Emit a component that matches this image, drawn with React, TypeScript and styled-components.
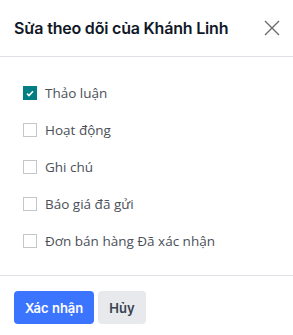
import { useState } from "react";
import styled, { createGlobalStyle } from "styled-components";

const GlobalStyle = createGlobalStyle`
  html, body {
    margin: 0;
    padding: 0;
    background: #ffffff;
  }
  body {
    font-family: Inter, "Noto Sans", sans-serif;
  }
`;

const StyledDialog = styled.div`
  width: 293px;
  height: 335px;
  display: flex;
  flex-direction: column;
  background: #ffffff;
  box-sizing: border-box;
`;

const StyledHeader = styled.div`
  height: 57px;
  display: flex;
  align-items: center;
  justify-content: space-between;
  padding: 0 12px 0 14px;
  border-bottom: 1px solid #dee2e6;
  box-sizing: border-box;
`;

const StyledTitle = styled.h4`
  margin: 0;
  font-size: 16px;
  font-weight: 600;
  color: #111827;
  letter-spacing: -0.2px;
`;

const StyledClose = styled.button`
  width: 18px;
  height: 18px;
  padding: 0;
  border: none;
  background: none;
  display: flex;
  align-items: center;
  justify-content: center;
  cursor: pointer;
`;

const StyledBody = styled.div`
  flex: 1;
  display: flex;
  flex-direction: column;
  gap: 15px;
  padding: 25px 23px 0;
  border-bottom: 1px solid #dee2e6;
`;

const StyledRow = styled.label`
  display: flex;
  align-items: center;
  gap: 8px;
  height: 22px;
  font-family: "Open Sans", sans-serif;
  font-size: 13.5px;
  color: #4b5058;
  cursor: pointer;
`;

const StyledBox = styled.span<{ $checked: boolean }>`
  width: 14px;
  height: 14px;
  box-sizing: border-box;
  border: 1px solid ${(p) => (p.$checked ? "#017e84" : "#c4c6c9")};
  background: ${(p) => (p.$checked ? "#017e84" : "#ffffff")};
  display: flex;
  align-items: center;
  justify-content: center;
`;

const StyledFooter = styled.div`
  height: 59px;
  display: flex;
  align-items: flex-start;
  gap: 4px;
  padding: 15px 14px 0;
  box-sizing: border-box;
`;

const StyledButton = styled.button<{ $primary?: boolean }>`
  height: 33px;
  padding: 0 11px;
  border: none;
  border-radius: 4px;
  font-family: Inter, sans-serif;
  font-size: 13px;
  font-weight: 600;
  background: ${(p) => (p.$primary ? "#3b74ff" : "#e7e9ed")};
  color: ${(p) => (p.$primary ? "#ffffff" : "#374151")};
  cursor: pointer;
`;

const items = [
  "Thảo luận",
  "Hoạt động",
  "Ghi chú",
  "Báo giá đã gửi",
  "Đơn bán hàng Đã xác nhận",
];

const App = () => {
  const [checked, setChecked] = useState<boolean[]>([true, false, false, false, false]);

  const toggle = (i: number) =>
    setChecked((prev) => prev.map((v, j) => (j === i ? !v : v)));

  return (
    <StyledDialog>
      <GlobalStyle />
      <StyledHeader>
        <StyledTitle>Sửa theo dõi của Khánh Linh</StyledTitle>
        <StyledClose aria-label="Close">
          <svg width="16" height="16" viewBox="0 0 16 16">
            <path d="M1 1L15 15M15 1L1 15" stroke="#6b6b6b" strokeWidth="1.4" />
          </svg>
        </StyledClose>
      </StyledHeader>
      <StyledBody>
        {items.map((label, i) => (
          <StyledRow key={label} onClick={() => toggle(i)}>
            <StyledBox $checked={checked[i]}>
              {checked[i] && (
                <svg width="8" height="7" viewBox="0 0 8 7">
                  <path d="M1 3.6L3 5.5L7 1.3" stroke="#fff" strokeWidth="1.6" fill="none" />
                </svg>
              )}
            </StyledBox>
            {label}
          </StyledRow>
        ))}
      </StyledBody>
      <StyledFooter>
        <StyledButton $primary>Xác nhận</StyledButton>
        <StyledButton>Hủy</StyledButton>
      </StyledFooter>
    </StyledDialog>
  );
};

export default App;
